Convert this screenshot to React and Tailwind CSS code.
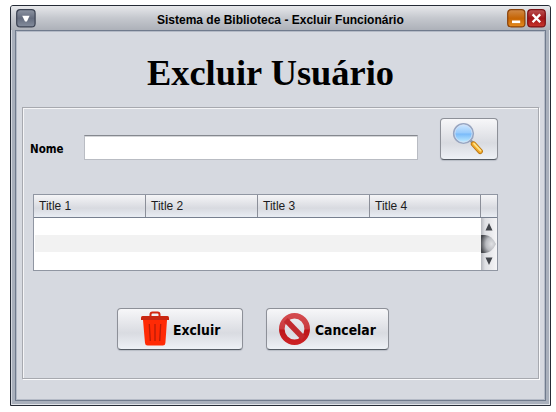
import React from "react";

const raised =
  "flex items-center rounded-[4px] border border-[#8d9098] border-b-[#555b64] bg-linear-to-b from-[#f7f7f9] via-[#d9dbe1] via-60% to-[#eef1f6] shadow-[0_1px_1px_#b9bdc6]";

function MenuButton() {
  return (
    <svg className="block" width="20" height="19" viewBox="0 0 20 19">
      <defs>
        <linearGradient id="menu" x1="0" y1="0" x2="0" y2="1">
          <stop offset="0" stopColor="#8e95a3" />
          <stop offset="0.5" stopColor="#646c7e" />
          <stop offset="1" stopColor="#858e9e" />
        </linearGradient>
      </defs>
      <rect x="0.7" y="0.7" width="18.4" height="17.2" rx="3.5" fill="url(#menu)" stroke="#3c4353" strokeWidth="1.2" />
      <path d="M6.2 6.8h7.4L10.9 12.4H9z" fill="#fff" />
    </svg>
  );
}

function MinimizeButton() {
  return (
    <svg className="block" width="19" height="19" viewBox="0 0 19 19">
      <defs>
        <linearGradient id="min" x1="0" y1="0" x2="0" y2="1">
          <stop offset="0" stopColor="#d18a48" />
          <stop offset="0.5" stopColor="#c66505" />
          <stop offset="1" stopColor="#e58b1e" />
        </linearGradient>
      </defs>
      <rect x="0.7" y="0.7" width="17.2" height="17.2" rx="3.5" fill="url(#min)" stroke="#8a4209" strokeWidth="1.2" />
      <rect x="5" y="11.5" width="8.2" height="2.6" fill="#fff" />
    </svg>
  );
}

function CloseButton() {
  return (
    <svg className="block" width="19" height="19" viewBox="0 0 19 19">
      <defs>
        <linearGradient id="close" x1="0" y1="0" x2="0" y2="1">
          <stop offset="0" stopColor="#bd5555" />
          <stop offset="0.5" stopColor="#a01518" />
          <stop offset="1" stopColor="#c9352c" />
        </linearGradient>
      </defs>
      <rect x="0.7" y="0.7" width="17.6" height="17.2" rx="3.5" fill="url(#close)" stroke="#7c1015" strokeWidth="1.2" />
      <path d="M5.6 5.4l7.6 7.8M13.2 5.4L5.6 13.2" stroke="#fff" strokeWidth="2.3" />
    </svg>
  );
}

function SearchIcon() {
  return (
    <svg className="block" width="32" height="34" viewBox="0 0 32 34">
      <defs>
        <linearGradient id="lens" x1="0" y1="0" x2="0" y2="1">
          <stop offset="0" stopColor="#d2e9ff" />
          <stop offset="0.48" stopColor="#96cafc" />
          <stop offset="0.52" stopColor="#78bafa" />
          <stop offset="1" stopColor="#c9f1ff" />
        </linearGradient>
      </defs>
      <path d="M18.500 18.500l2.500 2.500" stroke="#8f949f" strokeWidth="2.500" />
      <path d="M21.500 22l6.700 7.300" stroke="#b87512" strokeWidth="5.400" strokeLinecap="round" />
      <path d="M21.500 22l6.700 7.300" stroke="#f2a92b" strokeWidth="3.800" strokeLinecap="round" />
      <path d="M22 21.700l6.500 7" stroke="#ffe487" strokeWidth="1.700" strokeLinecap="round" />
      <circle cx="11.500" cy="11.500" r="9.800" fill="url(#lens)" stroke="#98a5c0" strokeWidth="1.600" />
      <circle cx="11.500" cy="11.500" r="8.600" fill="none" stroke="#d3e0f3" strokeWidth="0.800" />
    </svg>
  );
}

function TrashIcon() {
  return (
    <svg className="block shrink-0" width="30" height="36" viewBox="0 0 30 36">
      <path d="M10.500 6V3.500q0-2 2-2h5q2 0 2 2V6" fill="none" stroke="#d12810" strokeWidth="2" />
      <path d="M3 9h24l-1.600 23q-.2 2.500-2.600 2.500H7.600Q5.200 34.500 5 32z" fill="#ff2a05" />
      <path d="M1 6.500q0-1.500 1.500-1.500h25q1.500 0 1.500 1.500V9H1z" fill="#c92712" />
      <path d="M9.300 13l1 17M15 13v17M20.700 13l-1 17" stroke="#b91c08" strokeWidth="1.300" />
    </svg>
  );
}

function CancelIcon() {
  return (
    <svg className="block shrink-0" width="33" height="34" viewBox="0 0 33 34">
      <defs>
        <linearGradient id="ban" x1="0" y1="0" x2="0" y2="1">
          <stop offset="0" stopColor="#d34a4e" />
          <stop offset="0.48" stopColor="#ca3a3e" />
          <stop offset="0.55" stopColor="#bd1518" />
          <stop offset="1" stopColor="#cb2024" />
        </linearGradient>
      </defs>
      <ellipse cx="16.500" cy="17" rx="12.700" ry="13.200" fill="none" stroke="url(#ban)" strokeWidth="5.600" />
      <path d="M7.800 8l17.400 18" stroke="#c22a2e" strokeWidth="5.400" />
    </svg>
  );
}

function HeaderCell({ width = "w-[112px]", children }) {
  return (
    <div className={`${width} border-r border-[#8b8f99] pl-[5px] text-[12px] leading-[22px] text-[#1c1c20]`}>
      {children}
    </div>
  );
}

function ScrollBar() {
  return (
    <svg className="block" width="16" height="52" viewBox="0 0 16 52">
      <defs>
        <linearGradient id="track" x1="0" y1="0" x2="1" y2="0">
          <stop offset="0" stopColor="#b4b6bc" />
          <stop offset="0.25" stopColor="#dfe0e4" />
          <stop offset="1" stopColor="#f5f5f7" />
        </linearGradient>
        <radialGradient id="thumb" cx="0.7" cy="0.5" r="0.75">
          <stop offset="0" stopColor="#e0e1e4" />
          <stop offset="0.5" stopColor="#b9bbc0" />
          <stop offset="1" stopColor="#44464b" />
        </radialGradient>
      </defs>
      <rect width="16" height="52" fill="url(#track)" />
      <path d="M0 17h4Q11 17.500 15 26Q11 34.500 4 35H0z" fill="url(#thumb)" />
      <path d="M8 5l3.500 7.500h-7zM4.500 39.500h7L8 47z" fill="#42454b" />
    </svg>
  );
}

export default function App() {
  return (
    <div className="h-[412px] w-[556px] overflow-hidden bg-white pt-[5px] pl-[10px] font-['Liberation_Sans',Arial,sans-serif] text-black">
      <div className="flex h-[401px] w-[541px] flex-col rounded-t-[3px] border border-[#252b36] bg-[#a9b0bc] shadow-[inset_1px_0_0_#d5d8df,inset_-1px_-1px_0_#e2e5ea]">
        <header className="flex h-[24px] shrink-0 items-center rounded-t-[2px] bg-linear-to-b from-[#e7e8eb] via-[#c5c8ce] to-[#adb1b9] pr-[4px] pl-[5px]">
          <MenuButton />
          <h1 className="ml-[121px] w-[247px] pt-[3px] text-[12px] font-bold whitespace-nowrap">
            Sistema de Biblioteca - Excluir Funcionário
          </h1>
          <div className="ml-auto flex gap-px">
            <MinimizeButton />
            <CloseButton />
          </div>
        </header>

        <main className="mx-[4px] mb-[4px] flex flex-1 flex-col border border-[#707b8d] bg-[#d6d9e0] px-[6px] pt-px shadow-[inset_0_0_0_1px_#b4bac6]">
          <h2 className="flex h-[75px] items-center pt-[8px] pl-[125px] font-['Liberation_Serif','Times_New_Roman',serif] text-[36.4px] font-bold whitespace-nowrap">
            Excluir Usuário
          </h2>

          <section className="h-[272px] w-[517px] shrink-0 border border-[#a7a9af] shadow-[inset_1px_1px_0_#f5f5f7,1px_1px_0_#fafafc]">
            <div className="mt-[10px] flex h-[42px] pl-[7px]">
              <label className="mt-[22px] w-[54px] font-['DejaVu_Sans_Condensed','DejaVu_Sans',sans-serif] text-[11.5px] leading-[18px] font-bold">
                Nome
              </label>
              <input
                aria-label="Nome"
                className="mt-[17px] h-[25px] w-[334px] border border-[#b9bcc3] border-t-[#85888f] bg-white shadow-[inset_0_1px_0_#d4d5d8] outline-none"
              />
              <button aria-label="Pesquisar" className={raised + " ml-[22px] h-[42px] w-[58px] pl-[11px]"}>
                <SearchIcon />
              </button>
            </div>

            <div className="mt-[34px] ml-[10px] h-[77px] w-[465px] border border-[#9096a2] bg-white">
              <div className="flex h-[23px] border-b border-[#77808f] bg-linear-to-b from-[#f5f5f7] via-[#d8dae0] via-60% to-[#e9edf3]">
                <HeaderCell>Title 1</HeaderCell>
                <HeaderCell>Title 2</HeaderCell>
                <HeaderCell>Title 3</HeaderCell>
                <HeaderCell width="w-[111px]">Title 4</HeaderCell>
              </div>
              <div className="flex h-[52px]">
                <div className="flex w-[447px] flex-col pt-[17px]">
                  <div className="ml-px h-[17px] bg-[#f2f2f2]" />
                </div>
                <ScrollBar />
              </div>
            </div>

            <div className="mt-[37px] ml-[94px] flex gap-[23px] font-['DejaVu_Sans_Condensed','DejaVu_Sans',sans-serif] text-[13.8px] font-bold">
              <button className={raised + " h-[42px] w-[126px] gap-[3px] pl-[22px]"}>
                <TrashIcon />
                <span className="pt-[2px]">Excluir</span>
              </button>
              <button className={raised + " h-[42px] w-[123px] gap-[4px] pl-[11px]"}>
                <CancelIcon />
                <span className="pt-[2px]">Cancelar</span>
              </button>
            </div>
          </section>
        </main>
      </div>
    </div>
  );
}
